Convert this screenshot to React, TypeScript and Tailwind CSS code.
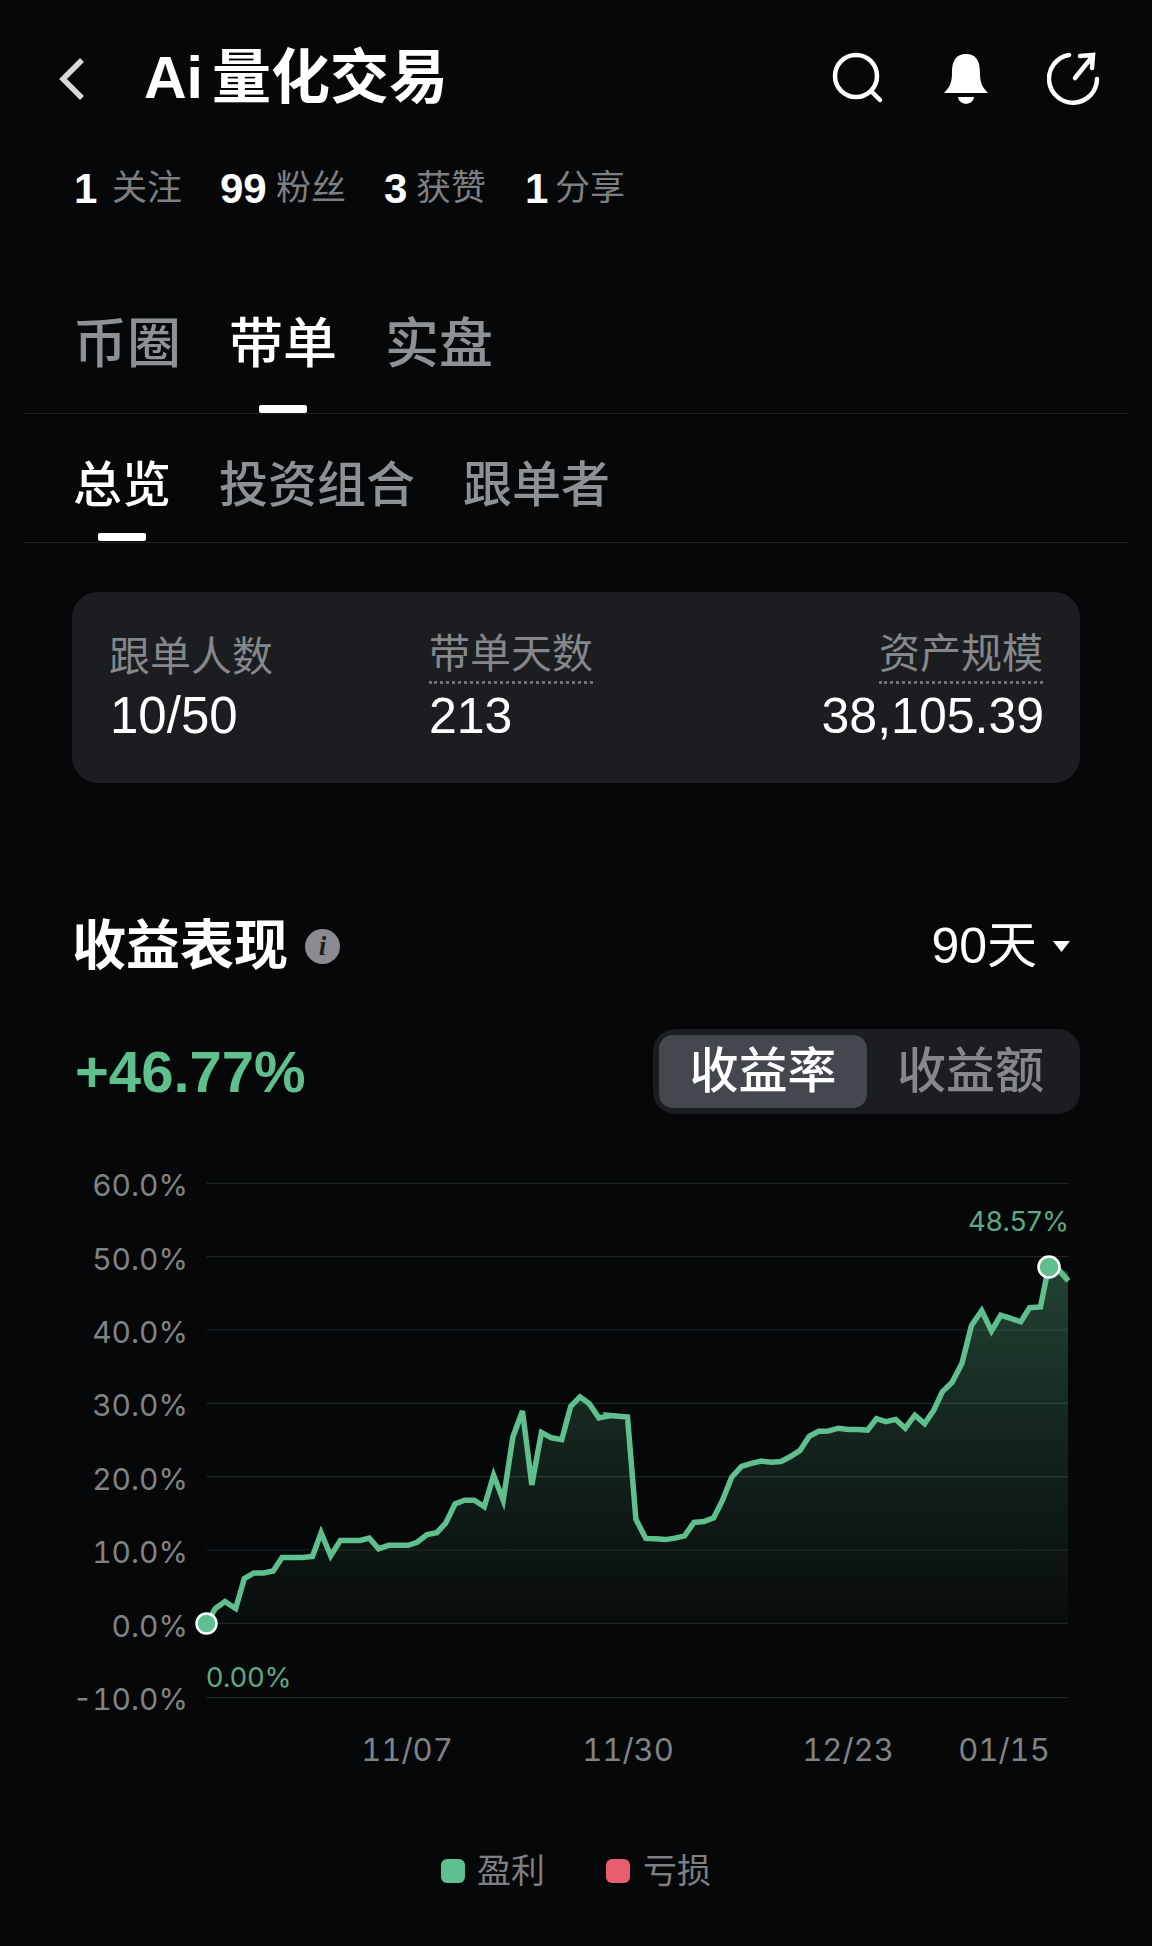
import React from "react";

const FONT = '"Liberation Sans", "Noto Sans CJK SC", sans-serif';
const CHART_FONT = 'Inter, "Noto Sans CJK SC", sans-serif';

const leftPts: [number, number][] = [[410,1237],[435,1198],[462,1180],[492,1198],[516,1120],[543,1105],[570,1105],[597,1100],[622,1065],[650,1065],[678,1065],[707,1062],[731,1000],[758,1060],[785,1020],[812,1020],[840,1020],[866,1014],[892,1042],[920,1033],[948,1033],[975,1033],[1000,1025],[1028,1005],[1055,1000],[1080,975],[1106,925],[1133,915],[1160,915],[1188,932],[1214,850],[1241,915],[1268,750],[1295,682],[1321,875],[1348,738],[1376,752],[1405,757],[1430,670],[1456,645],[1482,663],[1509,700],[1535,695]];
const rightPts: [number, number][] = [[22,693],[78,698],[102,965],[130,1015],[157,1016],[186,1018],[213,1014],[240,1008],[267,973],[295,971],[323,961],[347,917],[374,855],[402,827],[430,819],[458,813],[486,816],[514,814],[541,801],[568,785],[594,748],[621,735],[649,734],[677,727],[705,730],[732,730],[760,732],[785,702],[812,710],[840,704],[867,727],[894,693],[922,715],[948,680],[972,632],[1000,607],[1028,557],[1055,458],[1084,420],[1112,473],[1138,432],[1167,440],[1195,449],[1220,412],[1251,410],[1273,310],[1300,310],[1330,342]];

const pts = [
  ...leftPts.map(([x, y]) => [60 + x / 2.8, 1150 + y / 2.613]),
  ...rightPts.map(([x, y]) => [600 + x / 2.84, 1150 + y / 2.613]),
];
const linePath = pts.map(([x, y], i) => `${i ? "L" : "M"}${x.toFixed(1)} ${y.toFixed(1)}`).join(" ");
const areaPath = `${pts.filter(([x]) => x <= 1068).map(([x, y], i) => `${i ? "L" : "M"}${x.toFixed(1)} ${y.toFixed(1)}`).join(" ")} L1068 1272 L1068 1623.4 L206.4 1623.4 Z`;
const gridYs = [1183.3, 1256.6, 1330, 1403.3, 1476.6, 1550, 1623.4, 1697.6];
const yLabels = ["60.0%", "50.0%", "40.0%", "30.0%", "20.0%", "10.0%", "0.0%", "-10.0%"];

function Chart() {
  return (
    <svg width="890" height="578" viewBox="190 1148 890 578" className="block">
      <defs>
        <linearGradient id="areaFill" x1="0" y1="1272" x2="0" y2="1623.4" gradientUnits="userSpaceOnUse">
          <stop offset="0" stopColor="#5fbf8e" stopOpacity="0.32" />
          <stop offset="0.5" stopColor="#5fbf8e" stopOpacity="0.15" />
          <stop offset="1" stopColor="#5fbf8e" stopOpacity="0.03" />
        </linearGradient>
      </defs>
      {gridYs.map((y) => (
        <line key={y} x1="206.4" x2="1068" y1={y} y2={y} stroke="#212426" strokeWidth="1.2" />
      ))}
      <path d={areaPath} fill="url(#areaFill)" />
      <path d={linePath} fill="none" stroke="#5fbf8e" strokeWidth="5.5" strokeLinejoin="miter" />
      <circle cx="206.5" cy="1623.5" r="10" fill="#5fbf8e" stroke="#ffffff" strokeWidth="2.5" />
      <circle cx="1049" cy="1267" r="10.5" fill="#5fbf8e" stroke="#ffffff" strokeWidth="2.5" />
      <text x="1069" y="1231" textAnchor="end" fontSize="27.5" fill="#5fa883" fontFamily={CHART_FONT}>48.57%</text>
      <text x="206" y="1687" fontSize="27.5" fill="#5fa883" fontFamily={CHART_FONT}>0.00%</text>
    </svg>
  );
}

function Stat({ n, label, cls, nw }: { n: string; label: string; cls: string; nw: string }) {
  return (
    <div className={`flex items-center ${cls}`}>
      <span className={`text-[42px] font-bold text-white ${nw}`}>{n}</span>
      <span className="text-[35px] text-[#7d7f82]">{label}</span>
    </div>
  );
}

export default function App() {
  return (
    <div className="w-[1152px] h-[1946px] overflow-hidden bg-[#050708] text-white" style={{ fontFamily: FONT }}>
      {/* header */}
      <div className="h-[154px] pt-[3px] flex items-center pl-[58px]">
        <svg width="30" height="44" viewBox="0 0 30 44" className="block">
          <path d="M24 3 L5 22 L24 41" fill="none" stroke="#d8d8d8" strokeWidth="5.5" />
        </svg>
        <h1 className="ml-[56px] font-bold leading-none whitespace-nowrap flex items-center">
          <span className="text-[59px]">Ai</span>
          <span className="ml-[9px] text-[59px]">量化交易</span>
        </h1>
        <div className="ml-auto flex items-center mr-[49px]">
          <svg width="56" height="56" viewBox="0 0 56 56" className="block">
            <circle cx="26" cy="25" r="21" fill="none" stroke="#fff" strokeWidth="4.5" />
            <path d="M42 41 L50 49" stroke="#fff" strokeWidth="4.5" strokeLinecap="round" />
          </svg>
          <svg width="48" height="56" viewBox="0 0 48 56" className="block ml-[56px]">
            <path d="M24 3 C36 3 38 13 38 22 C38 31 40 36 46 42 L2 42 C8 36 10 31 10 22 C10 13 12 3 24 3 Z" fill="#fff" />
            <path d="M16 46 L32 46 C31 55 17 55 16 46 Z" fill="#fff" />
          </svg>
          <svg width="56" height="56" viewBox="0 0 56 56" className="block ml-[57px]">
            <path d="M22 4 A24 24 0 1 0 50 28" fill="none" stroke="#fff" strokeWidth="4.500" strokeLinecap="round" />
            <path d="M28 27 L45 6 M33 5 L46 4 L45 17" fill="none" stroke="#fff" strokeWidth="4.500" strokeLinecap="round" strokeLinejoin="miter" />
          </svg>
        </div>
      </div>

      {/* follower stats */}
      <div className="h-[66px] pt-[2px] flex items-center pl-[74px] whitespace-nowrap">
        <Stat n="1" label="关注" cls="" nw="w-[38px]" />
        <Stat n="99" label="粉丝" cls="ml-[38px]" nw="w-[56px]" />
        <Stat n="3" label="获赞" cls="ml-[38px]" nw="w-[32px]" />
        <Stat n="1" label="分享" cls="ml-[39px]" nw="w-[30px]" />
      </div>

      {/* main tabs */}
      <div className="mt-[59px] mx-[24px] border-b border-[#1f2224] pl-[49px] flex gap-[48px] text-[54px] font-medium">
        <div className="flex flex-col items-center">
          <span className="h-[126px] pt-[5px] flex items-center text-[#8e9193]">币圈</span>
          <span className="h-2" />
        </div>
        <div className="flex flex-col items-center">
          <span className="h-[126px] pt-[5px] flex items-center text-white">带单</span>
          <span className="h-2 w-[48px] bg-white rounded-[2px]" />
        </div>
        <div className="flex flex-col items-center">
          <span className="h-[126px] pt-[5px] flex items-center text-[#8e9193]">实盘</span>
          <span className="h-2" />
        </div>
      </div>

      {/* sub tabs */}
      <div className="mt-[23px] mx-[24px] pb-px border-b border-[#1f2224] pl-[49px] flex gap-[48px] text-[49px] font-medium">
        <div className="flex flex-col items-center">
          <span className="h-[96px] pt-[2px] flex items-center text-white">总览</span>
          <span className="h-2 w-[48px] bg-white rounded-[2px]" />
        </div>
        <span className="h-[96px] pt-[2px] flex items-center text-[#8e9193]">投资组合</span>
        <span className="h-[96px] pt-[2px] flex items-center text-[#8e9193]">跟单者</span>
      </div>

      {/* summary card */}
      <div className="mt-[49px] ml-[72px] w-[1008px] h-[191px] rounded-[26px] bg-[#1b1d21] pl-[37px] pr-[37px] pt-[36px] grid grid-cols-[320px_1fr_auto]">
        <div>
          <div className="h-[56px] flex items-center text-[41px] text-[#85878a] mt-[2px]">跟单人数</div>
          <div className="text-[51px] leading-[54px] mt-[3px] ml-[1px] text-white">10/50</div>
        </div>
        <div>
          <div className="inline-block h-[56px] leading-[52px] text-[41px] text-[#85878a] border-b-[3px] border-dotted border-[#6f7174]">带单天数</div>
          <div className="text-[50px] leading-[54px] mt-[5px] text-white">213</div>
        </div>
        <div className="text-right">
          <div className="inline-block h-[56px] leading-[52px] text-[41px] text-[#85878a] border-b-[3px] border-dotted border-[#6f7174]">资产规模</div>
          <div className="text-[50px] leading-[54px] mt-[5px] mr-[-1px] text-white">38,105.39</div>
        </div>
      </div>

      {/* section heading */}
      <div className="mt-[123px] h-[80px] pl-[72px] pr-[80px] flex items-center">
        <h2 className="text-[54px] font-bold leading-none">收益表现</h2>
        <span className="ml-[17px] w-[35px] h-[35px] rounded-full bg-[#8a8c8f] flex items-center justify-center text-[#1b1d21] text-[27px] font-bold italic" style={{ fontFamily: '"Liberation Serif", serif' }}>i</span>
        <span className="ml-auto text-[50px] text-white">90天</span>
        <svg width="20" height="14" viewBox="0 0 20 14" className="ml-[15px] block">
          <path d="M1 2 L18 2 L9.500 13 Z" fill="#fff" />
        </svg>
      </div>

      {/* return + toggle */}
      <div className="mt-[43px] h-[85px] pl-[75px] flex items-center">
        <span className="text-[58px] font-bold text-[#5fbf8e] leading-none">+46.77%</span>
        <div className="ml-auto mr-[72px] w-[427px] h-[85px] rounded-[22px] bg-[#1b1d21] p-[6px] flex items-center text-[49px]">
          <span className="w-[208px] h-[73px] rounded-[14px] bg-[#45474f] flex items-center justify-center text-white font-medium">收益率</span>
          <span className="flex-1 flex items-center justify-center text-[#85878a] font-medium">收益额</span>
        </div>
      </div>

      {/* chart */}
      <div className="mt-[34px] flex h-[578px]">
        <div className="w-[190px] pt-[1px] flex flex-col tabular-nums" style={{ fontFamily: CHART_FONT }}>
          {yLabels.map((l) => (
            <div key={l} className="shrink-0 h-[73.4px] flex items-center justify-end pr-[2px] text-[30px] text-[#808386]">{l}</div>
          ))}
        </div>
        <Chart />
      </div>
      <div className="h-[48px] flex items-center text-[31px] text-[#808386] tabular-nums" style={{ fontFamily: CHART_FONT }}>
        <span className="ml-[357px] w-[100px] text-center">11/07</span>
        <span className="ml-[121px] w-[100px] text-center">11/30</span>
        <span className="ml-[120px] w-[100px] text-center">12/23</span>
        <span className="ml-[56px] w-[100px] text-center">01/15</span>
      </div>

      {/* legend */}
      <div className="mt-[73px] h-[48px] pl-[441px] flex items-center text-[34px] text-[#7d7f82]">
        <span className="w-6 h-6 rounded-[6px] bg-[#5fc08f]" />
        <span className="ml-[12px]">盈利</span>
        <span className="ml-[61px] w-6 h-6 rounded-[6px] bg-[#e85d6f]" />
        <span className="ml-[13px]">亏损</span>
      </div>
    </div>
  );
}
